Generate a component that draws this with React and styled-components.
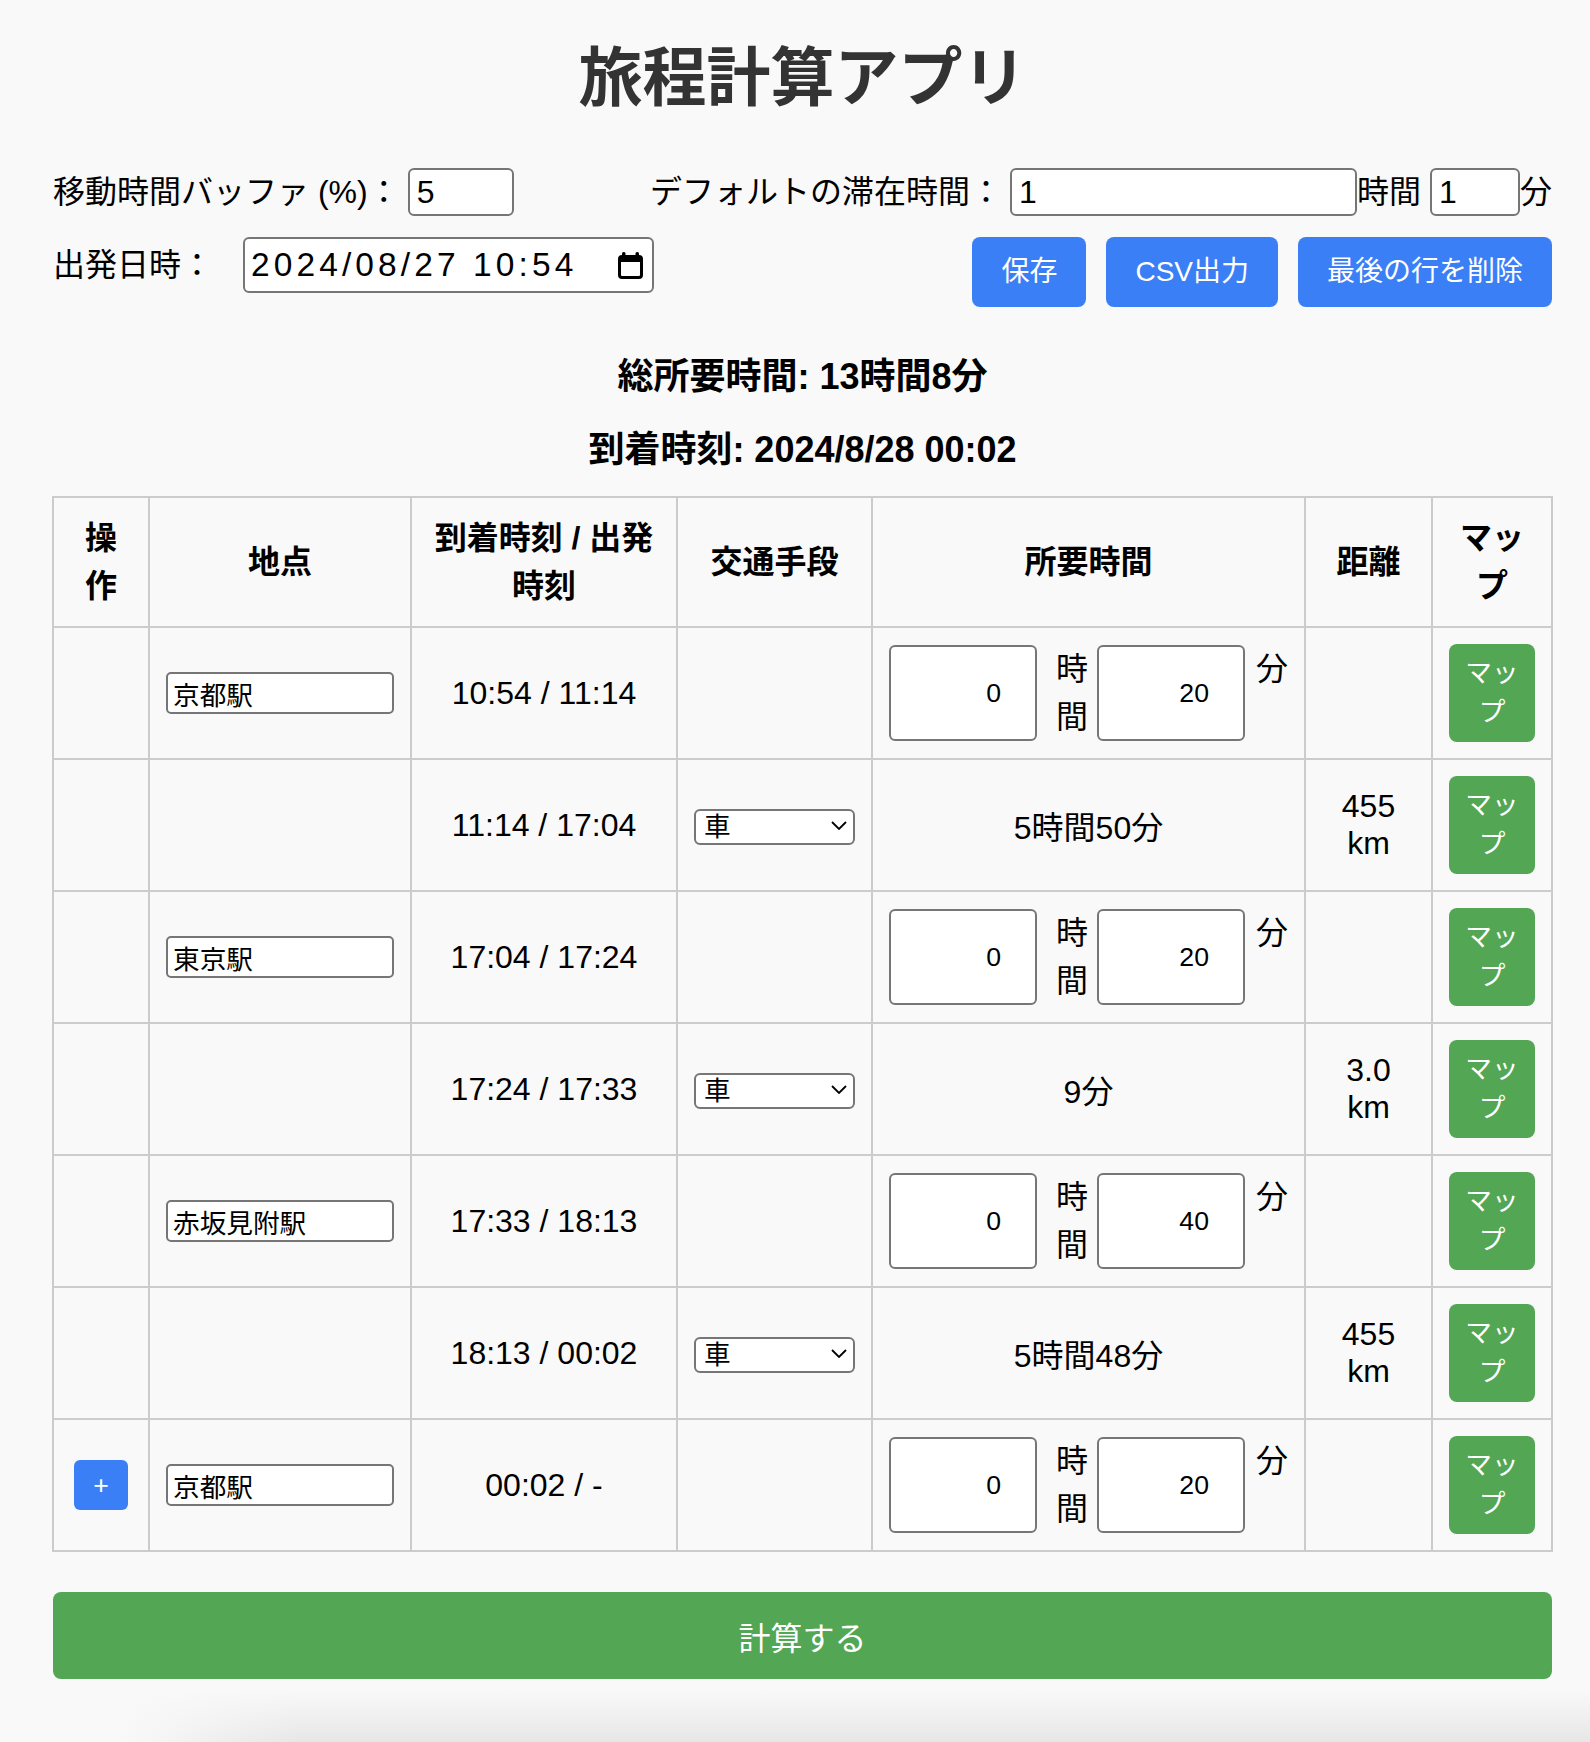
import React from 'react';
import styled, { createGlobalStyle } from 'styled-components';

const GlobalStyle = createGlobalStyle`
  html, body {
    margin: 0;
    padding: 0;
    background: #f9f9f9;
  }
  body {
    font-family: "Liberation Sans", "Noto Sans CJK JP", sans-serif;
    color: #000;
  }
`;

const Page = styled.div`
  display: flex;
  flex-direction: column;
  height: 1742px;
  overflow: hidden;
`;

const Container = styled.div`
  width: 1499px;
  margin-left: 53px;
  padding-top: 32px;
`;

const Title = styled.h1`
  margin: 0;
  text-align: center;
  font-size: 64px;
  line-height: 92px;
  font-weight: 700;
  color: #333;
`;

const SettingsRow = styled.div`
  display: flex;
  justify-content: space-between;
  align-items: ${p => p.$align || 'center'};
  margin-top: ${p => p.$top}px;
`;

const Field = styled.div`
  display: flex;
  align-items: center;
  font-size: 32px;
  line-height: 48px;
  white-space: nowrap;
`;

const Label = styled.span`
  margin-right: ${p => p.$gap ?? 8}px;
`;

const TextInput = styled.input`
  box-sizing: border-box;
  width: ${p => p.$w}px;
  height: 48px;
  border: 2px solid #767676;
  border-radius: 6px;
  background: #fff;
  padding: 0 7px;
  font-family: inherit;
  font-size: 32px;
  color: #000;
`;

const DateBox = styled.div`
  box-sizing: border-box;
  display: flex;
  align-items: center;
  justify-content: space-between;
  width: 411px;
  height: 56px;
  padding: 0 9px 0 6px;
  border: 2px solid #767676;
  border-radius: 6px;
  background: #fff;
  font-size: 33.5px;
  letter-spacing: 4.1px;
`;

const ButtonGroup = styled.div`
  display: flex;
  gap: 20px;
`;

const ActionButton = styled.button`
  height: 70px;
  padding: 0 29px;
  border: 0;
  border-radius: 8px;
  background: #3b7ff6;
  color: #fff;
  font-family: inherit;
  font-size: 28px;
  line-height: 42px;
`;

const Summary = styled.div`
  margin-top: ${p => p.$top}px;
  text-align: center;
  font-size: 36px;
  line-height: 54px;
  font-weight: 700;
`;

const Table = styled.table`
  margin-top: 19px;
  width: 1501px;
  margin-left: -1px;
  border-collapse: collapse;
  table-layout: fixed;
`;

const Th = styled.th`
  border: 2px solid #ccc;
  padding: 16px;
  font-size: 32px;
  line-height: 48px;
  font-weight: 700;
  text-align: center;
  vertical-align: middle;
`;

const Td = styled.td`
  border: 2px solid #ccc;
  padding: 16px;
  font-size: 32px;
  text-align: center;
  vertical-align: middle;
`;

const PlaceInput = styled.input`
  box-sizing: border-box;
  display: block;
  width: 100%;
  height: 42px;
  padding: 0 5px;
  border: 2px solid #767676;
  border-radius: 5px;
  background: #fff;
  font-family: inherit;
  font-size: 26.67px;
  color: #000;
`;

const SelectWrap = styled.div`
  position: relative;
  height: 36px;
`;

const ModeSelect = styled.select`
  box-sizing: border-box;
  width: 100%;
  height: 36px;
  padding: 0 8px;
  border: 2px solid #767676;
  border-radius: 6px;
  background: #fff;
  font-family: inherit;
  font-size: 26.67px;
  color: #000;
  appearance: none;
`;

const Chevron = styled.svg`
  position: absolute;
  right: 8px;
  top: 14px;
  pointer-events: none;
`;

const DurationBox = styled.div`
  display: flex;
  align-items: stretch;
  text-align: left;
`;

const NumInput = styled.input`
  box-sizing: border-box;
  width: 148px;
  margin: 0 ${p => p.$mr}px 0 ${p => p.$ml}px;
  padding: 0 34px 0 4px;
  border: 2px solid #767676;
  border-radius: 6px;
  background: #fff;
  font-family: inherit;
  font-size: 26.67px;
  text-align: right;
  color: #000;
`;

const Unit = styled.span`
  width: 32px;
  font-size: 32px;
  line-height: 48px;
`;

const MapButton = styled.button`
  display: block;
  width: 100%;
  height: 98px;
  padding: 10px;
  border: 0;
  border-radius: 8px;
  background: #53a653;
  color: #fff;
  font-family: inherit;
  font-size: 26.67px;
  line-height: 39px;
`;

const PlusButton = styled.button`
  display: block;
  margin: 0 auto;
  width: 54px;
  height: 50px;
  padding: 0;
  border: 0;
  border-radius: 6px;
  background: #3b7ff6;
  color: #fff;
  font-family: inherit;
  font-size: 26.67px;
`;

const CalcButton = styled.button`
  display: block;
  width: 100%;
  height: 87px;
  margin-top: 40px;
  border: 0;
  border-radius: 8px;
  background: #53a653;
  color: #fff;
  font-family: inherit;
  font-size: 32px;
`;

const BottomShade = styled.div`
  flex: 1;
  background:
    linear-gradient(to right, #f9f9f9 120px, rgba(249, 249, 249, 0) 300px),
    linear-gradient(to bottom, rgba(0, 0, 0, 0) 10px, rgba(0, 0, 0, 0.075) 100%);
`;

function CalendarIcon() {
  return (
    <svg width="25" height="27" viewBox="0 0 25 27">
      <rect x="4" y="0" width="3.5" height="6" rx="1.5" fill="#000" />
      <rect x="17.5" y="0" width="3.5" height="6" rx="1.5" fill="#000" />
      <path
        fillRule="evenodd"
        fill="#000"
        d="M4 3h17a4 4 0 0 1 4 4v16a4 4 0 0 1-4 4H4a4 4 0 0 1-4-4V7a4 4 0 0 1 4-4zM3 10v13a1 1 0 0 0 1 1h17a1 1 0 0 0 1-1V10z"
      />
    </svg>
  );
}

const rows = [
  { place: '京都駅', time: '10:54 / 11:14', h: 0, m: 20 },
  { time: '11:14 / 17:04', dur: '5時間50分', dist: '455 km' },
  { place: '東京駅', time: '17:04 / 17:24', h: 0, m: 20 },
  { time: '17:24 / 17:33', dur: '9分', dist: '3.0 km' },
  { place: '赤坂見附駅', time: '17:33 / 18:13', h: 0, m: 40 },
  { time: '18:13 / 00:02', dur: '5時間48分', dist: '455 km' },
  { place: '京都駅', time: '00:02 / -', h: 0, m: 20, last: true },
];

export default function App() {
  return (
    <Page>
      <GlobalStyle />
      <Container>
        <Title>旅程計算アプリ</Title>

        <SettingsRow $top={44}>
          <Field>
            <Label>移動時間バッファ (%)：</Label>
            <TextInput $w={106} defaultValue="5" />
          </Field>
          <Field>
            <Label>デフォルトの滞在時間：</Label>
            <TextInput $w={347} defaultValue="1" />
            <span>時間&nbsp;</span>
            <TextInput $w={90} defaultValue="1" />
            <span>分</span>
          </Field>
        </SettingsRow>

        <SettingsRow $top={21} $align="flex-start">
          <Field>
            <Label $gap={30}>出発日時：</Label>
            <DateBox>
              <span>2024/08/27 10:54</span>
              <CalendarIcon />
            </DateBox>
          </Field>
          <ButtonGroup>
            <ActionButton>保存</ActionButton>
            <ActionButton>CSV出力</ActionButton>
            <ActionButton>最後の行を削除</ActionButton>
          </ButtonGroup>
        </SettingsRow>

        <Summary $top={43}>総所要時間: 13時間8分</Summary>
        <Summary $top={19}>到着時刻: 2024/8/28 00:02</Summary>

        <Table>
          <colgroup>
            <col style={{ width: 96 }} />
            <col style={{ width: 262 }} />
            <col style={{ width: 266 }} />
            <col style={{ width: 195 }} />
            <col style={{ width: 433 }} />
            <col style={{ width: 127 }} />
            <col style={{ width: 120 }} />
          </colgroup>
          <thead>
            <tr>
              <Th>操作</Th>
              <Th>地点</Th>
              <Th>到着時刻 / 出発時刻</Th>
              <Th>交通手段</Th>
              <Th>所要時間</Th>
              <Th>距離</Th>
              <Th>マップ</Th>
            </tr>
          </thead>
          <tbody>
            {rows.map((r, i) => (
              <tr key={i}>
                <Td>{r.last && <PlusButton>+</PlusButton>}</Td>
                <Td>{r.place && <PlaceInput defaultValue={r.place} />}</Td>
                <Td>{r.time}</Td>
                <Td>
                  {!r.place && (
                    <SelectWrap>
                      <ModeSelect defaultValue="car">
                        <option value="car">車</option>
                        <option value="train">電車</option>
                        <option value="walk">徒歩</option>
                      </ModeSelect>
                      <Chevron width="16" height="9" viewBox="0 0 16 9">
                        <path d="M1 1l7 7 7-7" fill="none" stroke="#000" strokeWidth="1.8" />
                      </Chevron>
                    </SelectWrap>
                  )}
                </Td>
                <Td>
                  {r.place ? (
                    <DurationBox>
                      <NumInput $ml={0} $mr={19} defaultValue={r.h} />
                      <Unit>時間</Unit>
                      <NumInput $ml={9} $mr={11} defaultValue={r.m} />
                      <Unit>分</Unit>
                    </DurationBox>
                  ) : (
                    r.dur
                  )}
                </Td>
                <Td>{r.dist}</Td>
                <Td>
                  <MapButton>マップ</MapButton>
                </Td>
              </tr>
            ))}
          </tbody>
        </Table>

        <CalcButton>計算する</CalcButton>
      </Container>
      <BottomShade />
    </Page>
  );
}
